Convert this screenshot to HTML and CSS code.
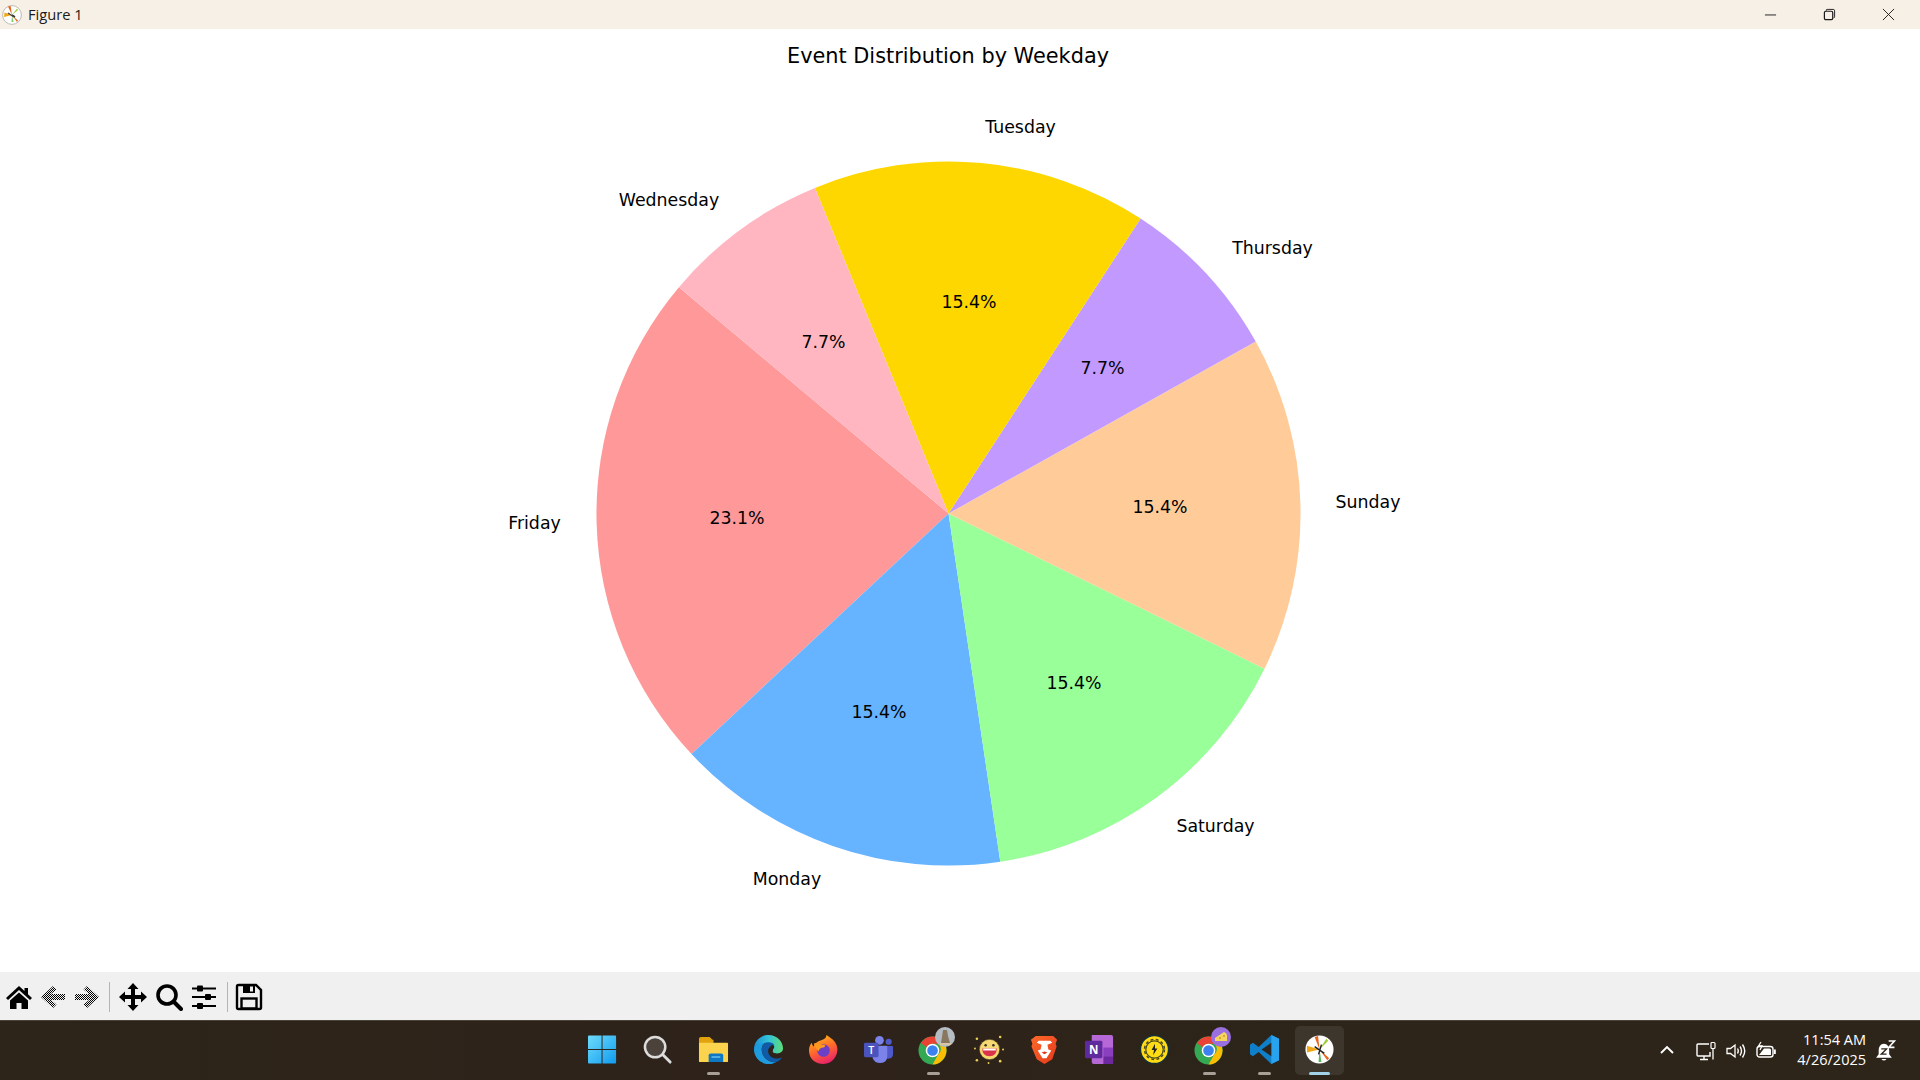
FILE: index.html
```html
<!DOCTYPE html>
<html lang="en">
<head>
<meta charset="utf-8">
<title>Figure 1</title>
<link rel="stylesheet" href="styles.css">
</head>
<body>
<div class="app">
  <header class="titlebar">
    <div class="title-left">
      <svg class="app-icon" viewBox="0 0 20 20"><circle cx="10" cy="10" r="9.4" fill="#fff" stroke="#aaa" stroke-width=".8"/><path d="M10 10 6 1.500 8.600 1z" fill="#e8641b"/><path d="M10 10 2.500 7.500 2 12z" fill="#f0a818"/><path d="M10 10 15 3.500 16 5z" fill="#9acd32"/><path d="M10 10 16 15.500 15 17z" fill="#e8641b"/><path d="M10 10 9.500 17 11.500 17z" fill="#7ccb6a"/><path d="M10 10 13 12" stroke="#333" stroke-width="1.600"/><path d="M6 8 12 12" stroke="#444" stroke-width="1.400"/></svg>
      <span class="window-title">Figure 1</span>
    </div>
    <div class="window-controls">
      <svg class="win-btn" viewBox="0 0 14 14"><path d="M1 7.500H13" stroke="#1a1a1a" stroke-width="1" fill="none"/></svg>
      <svg class="win-btn" viewBox="0 0 14 14"><path d="M3.500 3V2.200Q3.500 1.500 4.500 1.500H11Q12.500 1.500 12.500 3V9.500Q12.500 10.500 11.500 10.500" stroke="#1a1a1a" stroke-width="1" fill="none"/><rect x="1.500" y="3.500" width="9" height="9" rx="1.500" stroke="#1a1a1a" stroke-width="1.300" fill="none"/></svg>
      <svg class="win-btn" viewBox="0 0 14 14"><path d="M1 1 13 13M13 1 1 13" stroke="#1a1a1a" stroke-width="1" fill="none"/></svg>
    </div>
  </header>

  <main class="canvas">
    <svg class="plot" viewBox="0 29 1920 943" width="1920" height="943">
      <path fill="#ff9999" d="M948.500 513.500L678.900 287.200A352 352 0 0 0 691.500 754.100Z"/>
      <path fill="#66b3ff" d="M948.500 513.500L691.500 754.100A352 352 0 0 0 1000.300 861.700Z"/>
      <path fill="#99ff99" d="M948.500 513.500L1000.300 861.700A352 352 0 0 0 1264.500 668.700Z"/>
      <path fill="#ffcc99" d="M948.500 513.500L1264.500 668.700A352 352 0 0 0 1255.700 341.600Z"/>
      <path fill="#c299ff" d="M948.500 513.500L1255.700 341.600A352 352 0 0 0 1140.600 218.500Z"/>
      <path fill="#ffd700" d="M948.500 513.500L1140.600 218.500A352 352 0 0 0 814.900 187.900Z"/>
      <path fill="#ffb6c1" d="M948.500 513.500L814.900 187.900A352 352 0 0 0 678.900 287.200Z"/>
      <text class="plot-title" x="948" y="56">Event Distribution by Weekday</text>
      <g class="plot-label">
        <text x="1020.500" y="127">Tuesday</text>
        <text x="669" y="200">Wednesday</text>
        <text x="1272.500" y="248">Thursday</text>
        <text x="1368" y="502">Sunday</text>
        <text x="1215.500" y="826">Saturday</text>
        <text x="787" y="879">Monday</text>
        <text x="534.500" y="523">Friday</text>
        <text x="969" y="302">15.4%</text>
        <text x="823.500" y="342">7.7%</text>
        <text x="1102.500" y="368">7.7%</text>
        <text x="1160" y="507">15.4%</text>
        <text x="1074" y="683">15.4%</text>
        <text x="879" y="712">15.4%</text>
        <text x="737" y="518">23.1%</text>
      </g>
    </svg>
  </main>

  <nav class="toolbar">
    <svg class="tool" viewBox="0 0 28 28"><path d="M14 3 1 15l2 2 11-10 11 10 2-2-4-3.700V5h-3.500v3.100z" fill="#000"/><path d="M5 17.500 14 9.500l9 8V26h-6.500v-6h-5v6H5z" fill="#000"/></svg>
    <svg class="tool" viewBox="0 0 28 28"><defs><pattern id="dither" width="2" height="2" patternUnits="userSpaceOnUse"><rect width="1" height="1" fill="#000"/><rect x="1" y="1" width="1" height="1" fill="#000"/></pattern></defs><path d="M2 14 14 3l3.500 3.500L12 11h14v6H12l5.500 4.500L14 25z" fill="url(#dither)"/></svg>
    <svg class="tool" viewBox="0 0 28 28"><path d="M26 14 14 3l-3.500 3.500L16 11H2v6h14l-5.500 4.500L14 25z" fill="url(#dither)"/></svg>
    <span class="tool-sep"></span>
    <svg class="tool" viewBox="0 0 28 28"><path d="M14 0l5.500 6H16v6h6V8.500l6 5.500-6 5.500V16h-6v6h3.500L14 28l-5.500-6H12v-6H6v3.500L0 14l6-5.500V12h6V6H8.500z" fill="#000"/></svg>
    <svg class="tool" viewBox="0 0 28 28"><circle cx="12" cy="12" r="9" fill="none" stroke="#000" stroke-width="3.600"/><path d="M18.500 18.500 26 26" stroke="#000" stroke-width="4" stroke-linecap="round"/></svg>
    <svg class="tool" viewBox="0 0 28 28"><path d="M2 5.500H26M2 14H26M2 23H26" stroke="#000" stroke-width="2.200"/><rect x="7" y="2.500" width="6" height="6" rx="1"/><rect x="15" y="11" width="6" height="6" rx="1"/><rect x="7" y="20" width="6" height="6" rx="1"/></svg>
    <span class="tool-sep"></span>
    <svg class="tool" viewBox="0 0 28 28"><path d="M3.500 2H21l5 5v17.500q0 1.500-1.500 1.500h-21Q2 26 2 24.500v-21Q2 2 3.500 2z" fill="none" stroke="#000" stroke-width="2.400"/><path d="M8 2h12v8H8z" fill="#000"/><rect x="15" y="3.500" width="3" height="5" fill="#f0f0f0"/><rect x="6.500" y="15.500" width="15" height="10" fill="none" stroke="#000" stroke-width="2.400"/></svg>
  </nav>

  <footer class="taskbar">
    <div class="task-spacer"></div>
    <div class="task-apps">
      <div class="task-item"><svg class="task-icon" viewBox="0 0 32 32"><defs><linearGradient id="win" x1="0" y1="0" x2="1" y2="1"><stop offset="0" stop-color="#6fdcfb"/><stop offset="1" stop-color="#0f9bf0"/></linearGradient></defs><path d="M0 2.500Q0 1.500 1 1.500H14V15.500H0zM15 1.500H28Q29 1.500 29 2.500V15.500H15zM0 16.500H14V30.500H1Q0 30.500 0 29.500zM15 16.500H29V29.500Q29 30.500 28 30.500H15z" fill="url(#win)"/></svg></div>
      <div class="task-item"><svg class="task-icon" viewBox="0 0 32 32"><circle cx="12.500" cy="13.500" r="10.500" fill="#4a423b" stroke="#dcdcdc" stroke-width="2.600"/><path d="M20.500 21.500 28 29" stroke="#dcdcdc" stroke-width="3" stroke-linecap="round"/></svg></div>
      <div class="task-item"><svg class="task-icon" viewBox="0 0 32 32"><path d="M1 5q0-2 2-2h9l3 3h1v4H1z" fill="#e0a30e"/><path d="M1 9h29q1 0 1 1v18q0 1-1 1H2q-1 0-1-1z" fill="#fcd34d"/><path d="M11 22q0-2 2-2h11q2 0 2 2v7H11z" fill="#0f78c4"/><rect x="14" y="23" width="9" height="1.500" fill="#6cc0f0"/></svg><span class="indicator"></span></div>
      <div class="task-item"><svg class="task-icon" viewBox="0 0 32 32"><defs><linearGradient id="edge" x1="0" y1=".4" x2="1" y2=".4"><stop offset="0" stop-color="#1c8fd8"/><stop offset=".5" stop-color="#33c3d8"/><stop offset="1" stop-color="#5fdc78"/></linearGradient></defs><path d="M1 16C1 7 8 1 16 1c9 0 15 7 15 14 0 3-2.500 5-6 5-2 0-4-.5-4.500-1.500C20 16 22 15 22 13c-1-3-4-4-7-4-7 0-13 5-14 7z" fill="url(#edge)"/><path d="M1 16c1-4 7-7 12-7-4 2-5 7-3 12 2 5 8 9 14 8-3 2-5 2-8 2C8 31 1 24 1 16z" fill="#1f9be0"/><path d="M13 9C9 11 8 16 10 21c2 5 8 9 14 8 3-1 5-3 6-5-3 2-9 2-12-1-3-3-3-7-1-9 1-2 3-3 5-3-3-3-6-3-9-2z" fill="#0f5ba8"/></svg></div>
      <div class="task-item"><svg class="task-icon" viewBox="0 0 32 32"><defs><linearGradient id="fox" x1=".2" y1="0" x2=".6" y2="1"><stop offset="0" stop-color="#ffc21a"/><stop offset=".5" stop-color="#ff6a2b"/><stop offset="1" stop-color="#e9216b"/></linearGradient></defs><path d="M19 1c4 3 9 5 11 12 2 9-5 18-14 18C7 31 1 25 1 17c0-3 1-6 3-8 0 2 1 3 2 4 1-3 3-5 6-6 3-1 7-2 7-6z" fill="url(#fox)"/><circle cx="16" cy="17" r="6.500" fill="#6b3fc6"/><path d="M6 10c3-2 5 1 9 1s3 2 1 3c-3 0-5 2-5 4-2-2-4-5-5-8z" fill="#ff9a1f"/></svg></div>
      <div class="task-item"><svg class="task-icon" viewBox="0 0 32 32"><circle cx="17" cy="6.500" r="4.500" fill="#7b83eb"/><circle cx="26.500" cy="8" r="3.200" fill="#5059c9"/><path d="M23 12.500h7q1 0 1 1v7q0 5-5 5-2 0-3-1z" fill="#5059c9"/><path d="M10 12h14q1 0 1 1v10q0 7-7 7-6 0-8-5z" fill="#7b83eb"/><rect x="1" y="9" width="15" height="15" rx="1.500" fill="#4b53bc"/><text class="teams-t" x="8.500" y="21">T</text></svg></div>
      <div class="task-item">
        <svg class="task-icon" viewBox="0 0 32 32"><circle cx="15" cy="17" r="14.500" fill="#34a853"/><path d="M15 2.500A14.500 14.500 0 0 1 27.600 10H15a7 7 0 0 0-6.100 3.500L3 9.500A14.500 14.500 0 0 1 15 2.500z" fill="#ea4335"/><path d="M27.600 10A14.500 14.500 0 0 1 15 31.500L21 21a7 7 0 0 0 0-11z" fill="#fbbc04"/><circle cx="15" cy="17" r="7" fill="#fff"/><circle cx="15" cy="17" r="5.500" fill="#3b82f0"/></svg>
        <svg class="badge" viewBox="0 0 20 20"><circle cx="10" cy="10" r="10" fill="#b4bcc4"/><path d="M8 3h4l1 6 2 7H6l1-6z" fill="#8a7760"/><path d="M5 16h11v2H5z" fill="#d6c6a6"/></svg>
        <span class="indicator"></span>
      </div>
      <div class="task-item"><svg class="task-icon" viewBox="0 0 32 32"><circle cx="16" cy="16" r="10.500" fill="#f6d871" stroke="#3a3018" stroke-width=".6"/><path d="M8.500 15h15q0 8-7.500 8t-7.500-8z" fill="#d9344c"/><path d="M9.500 15h13v2h-13z" fill="#fff"/><circle cx="12" cy="11.500" r="1.300" fill="#333"/><circle cx="20" cy="11.500" r="1.300" fill="#333"/><g fill="#e9cf5a"><circle cx="3" cy="5" r="1.300"/><circle cx="27" cy="3" r="1.300"/><circle cx="30" cy="16" r="1"/><circle cx="3" cy="27" r="1.300"/><circle cx="27" cy="28" r="1.300"/><circle cx="15" cy="30" r="1"/><circle cx="1" cy="15" r="1"/></g></svg></div>
      <div class="task-item"><svg class="task-icon" viewBox="0 0 32 32"><defs><linearGradient id="brave" x1="0" y1="0" x2="1" y2="1"><stop offset="0" stop-color="#ff6a2a"/><stop offset="1" stop-color="#e3381a"/></linearGradient></defs><path d="M7 2h18l4 4-1.500 4 1 3L24 26l-8 5-8-5L2.500 13l1-3L2 6z" fill="url(#brave)"/><path d="M10 7h12l2 2-5 2 1 5 3 1-5 8h-4l-5-8 3-1 1-5-5-2z" fill="#fff"/><path d="M13 19l3 2 3-2-3-1z" fill="#e3381a"/></svg></div>
      <div class="task-item"><svg class="task-icon" viewBox="0 0 32 32"><path d="M8 1h20q2 0 2 2v26q0 2-2 2H10q-2 0-2-2z" fill="#b668d6"/><rect x="20" y="14" width="10" height="9" fill="#8a3fbf"/><rect x="20" y="23" width="10" height="8" fill="#6d2aa0"/><rect x="1" y="7" width="18" height="18" rx="1.500" fill="#5f2a9e"/><text class="onenote-n" x="10" y="21">N</text></svg></div>
      <div class="task-item"><svg class="task-icon" viewBox="0 0 32 32"><circle cx="16" cy="16" r="14.500" fill="#ffdc14" stroke="#15303a" stroke-width="1.500"/><circle cx="16" cy="16" r="9" fill="none" stroke="#4a4a20" stroke-width="1.300"/><circle cx="16" cy="16" r="10.300" fill="none" stroke="#4a4a20" stroke-width="1.500" stroke-dasharray="3 2.500"/><path d="M16.500 10 13 16.500h2.500L14.500 22l4.500-7h-2.500z" fill="#222"/></svg></div>
      <div class="task-item">
        <svg class="task-icon" viewBox="0 0 32 32"><circle cx="15" cy="17" r="14.500" fill="#34a853"/><path d="M15 2.500A14.500 14.500 0 0 1 27.600 10H15a7 7 0 0 0-6.100 3.500L3 9.500A14.500 14.500 0 0 1 15 2.500z" fill="#ea4335"/><path d="M27.600 10A14.500 14.500 0 0 1 15 31.500L21 21a7 7 0 0 0 0-11z" fill="#fbbc04"/><circle cx="15" cy="17" r="7" fill="#fff"/><circle cx="15" cy="17" r="5.500" fill="#3b82f0"/></svg>
        <svg class="badge" viewBox="0 0 20 20"><circle cx="10" cy="10" r="10" fill="#9a6fe0"/><path d="M4 11 13 5q3 1 3 4v5H4z" fill="#f6d55c"/><circle cx="9" cy="11" r="1" fill="#c99a20"/><circle cx="13" cy="9" r="1" fill="#c99a20"/></svg>
        <span class="indicator"></span>
      </div>
      <div class="task-item"><svg class="task-icon" viewBox="0 0 32 32"><path d="M23 1 31 5V27L23 31 10 18.500 4 23 1 21V11l3-2 6 4.500z" fill="#0f7fc9"/><path d="M23 1 31 5V27L23 31z" fill="#2aa3ef"/><path d="M23 9 13 16l10 7z" fill="#2b251d"/></svg><span class="indicator"></span></div>
      <div class="task-item active"><svg class="task-icon" viewBox="0 0 32 32"><circle cx="16" cy="16" r="14.500" fill="#fff"/><path d="M16 16 11 3 14.500 2z" fill="#e8641b"/><path d="M16 16 3 12 3 19z" fill="#f0a818"/><path d="M16 16 23 5 25 7z" fill="#9acd32"/><path d="M16 16 26 25 24 27z" fill="#e8641b"/><path d="M16 16 15 29 18 29z" fill="#5cb85c"/><path d="M11 13 21 20M18 11 15 21" stroke="#222" stroke-width="1.500"/></svg><span class="indicator wide"></span></div>
    </div>
    <div class="tray">
      <svg class="tray-icon chevron" viewBox="0 0 16 16"><path d="M2 11 8 5l6 6" fill="none" stroke="#fff" stroke-width="1.900"/></svg>
      <svg class="tray-icon monitor" viewBox="0 0 20 20"><path d="M13 3H2Q1 3 1 4v10q0 1 1 1h12v-4M8 15v3M4 18.500h8" fill="none" stroke="#fff" stroke-width="1.400"/><rect x="15" y="1.500" width="4" height="6" rx="1" fill="none" stroke="#fff" stroke-width="1.200"/><path d="M17 7.500v11" stroke="#fff" stroke-width="1.300"/></svg>
      <svg class="tray-icon speaker" viewBox="0 0 20 20"><path d="M1 7.500h3.500L9 4v12l-4.500-3.500H1z" fill="none" stroke="#fff" stroke-width="1.300"/><path d="M11.500 7.500q1.500 2.500 0 5M14 5.500q3 4.500 0 9M16.500 3.500q4.500 6.500 0 13" fill="none" stroke="#fff" stroke-width="1.400"/></svg>
      <svg class="tray-icon battery" viewBox="0 0 20 20"><rect x="1" y="5.500" width="16" height="10.500" rx="2.500" fill="none" stroke="#fff" stroke-width="1.400"/><path d="M3 14 8 7.500h5.500Q15 7.500 15 9v5z" fill="#fff"/><rect x="18" y="8.500" width="1.800" height="4.500" fill="#fff"/><path d="M5 1 2.500 5H6L4 9" fill="none" stroke="#fff" stroke-width="1.300"/></svg>
      <div class="clock"><span>11:54 AM</span><span>4/26/2025</span></div>
      <svg class="tray-icon bell" viewBox="0 0 20 20"><path d="M8.500 3.500Q3.500 4 3.500 10v3.500L1 17h15l-2.500-3.500V10q0-6-5-6.500z" fill="#fff"/><path d="M6 18h5q-2.500 3-5 0z" fill="#fff"/><path d="M6 8.500h5l-5 5h5" fill="none" stroke="#2d2419" stroke-width="1.300"/><path d="M13 1h5.500L13 7h5.500" fill="none" stroke="#fff" stroke-width="1.500"/></svg>
    </div>
  </footer>
</div>
</body>
</html>
```
FILE: styles.css
```css
* { box-sizing: border-box; }
html, body { margin: 0; padding: 0; }
body { width: 1920px; height: 1080px; overflow: hidden; background: #fff; font-family: "Open Sans", "Noto Sans", sans-serif; }
.app { display: flex; flex-direction: column; height: 1080px; }

.titlebar { height: 29px; flex: none; display: flex; justify-content: space-between; align-items: center; background: #f7f0e6; }
.title-left { display: flex; align-items: center; gap: 6px; padding-left: 2px; }
.app-icon { width: 20px; height: 20px; display: block; }
.window-title { font-size: 14.700px; line-height: 18px; padding-bottom: 2px; color: #1a1a1a; }
.window-controls { display: flex; gap: 46px; padding-right: 25px; align-items: center; }
.win-btn { width: 13px; height: 13px; display: block; }

.canvas { flex: none; height: 943px; background: #fff; }
.plot { display: block; }
.plot text { font-family: "DejaVu Sans", sans-serif; fill: #000; text-anchor: middle; dominant-baseline: central; }
.plot-title { font-size: 20.830px; }
.plot-label { font-size: 17.360px; }

.toolbar { height: 48px; flex: none; display: flex; align-items: center; background: #f0f0f0; padding: 1px 0 0 5px; }
.tool { width: 28px; height: 28px; margin-right: 6px; display: block; flex: none; }
.tool-sep ~ .tool { margin-right: 7.500px; }
.tool-sep { width: 1px; height: 30px; background: #b4b4b4; margin: 0 9px 0 2px; flex: none; }
.tool-sep ~ .tool-sep { margin-left: 1px; margin-right: 7.500px; }

.taskbar { height: 60px; flex: none; display: grid; grid-template-columns: 1fr auto 1fr; align-items: center; background: linear-gradient(90deg, #2d2519, #2e221a 42%, #2d2519 70%); border-top: 1px solid #4a4338; color: #fff; }
.task-apps { display: flex; gap: 6.150px; align-items: center; padding-left: 3px; }
.task-item { position: relative; width: 49px; height: 49px; display: flex; align-items: center; justify-content: center; border-radius: 5px; padding-bottom: 2px; }
.task-item.active { background: #3d362c; }
.task-icon { width: 31px; height: 31px; display: block; }
.teams-t { font-family: "Open Sans", sans-serif; font-size: 11px; font-weight: 600; fill: #fff; text-anchor: middle; }
.onenote-n { font-family: "Open Sans", sans-serif; font-size: 12px; font-weight: 700; fill: #fff; text-anchor: middle; }
.badge { position: absolute; top: 1px; left: 26px; width: 20px; height: 20px; }
.indicator { position: absolute; left: 18px; bottom: 0; width: 13px; height: 3px; border-radius: 2px; background: #a89f96; }
.indicator.wide { left: 14px; width: 21px; background: #a2d2e8; }

.tray { display: flex; align-items: center; justify-content: flex-end; padding-right: 24px; }
.tray-icon { display: block; width: 20px; height: 20px; flex: none; }
.chevron { width: 16px; height: 16px; margin-right: 21px; margin-bottom: 1px; }
.monitor { margin-right: 10px; }
.speaker { margin-right: 10px; }
.battery { margin-right: 21px; }
.clock { display: flex; flex-direction: column; align-items: flex-end; font-size: 14.500px; line-height: 20px; margin-right: 10px; padding-bottom: 2px; }
.bell { width: 21px; height: 21px; margin-left: -1px; }
```
